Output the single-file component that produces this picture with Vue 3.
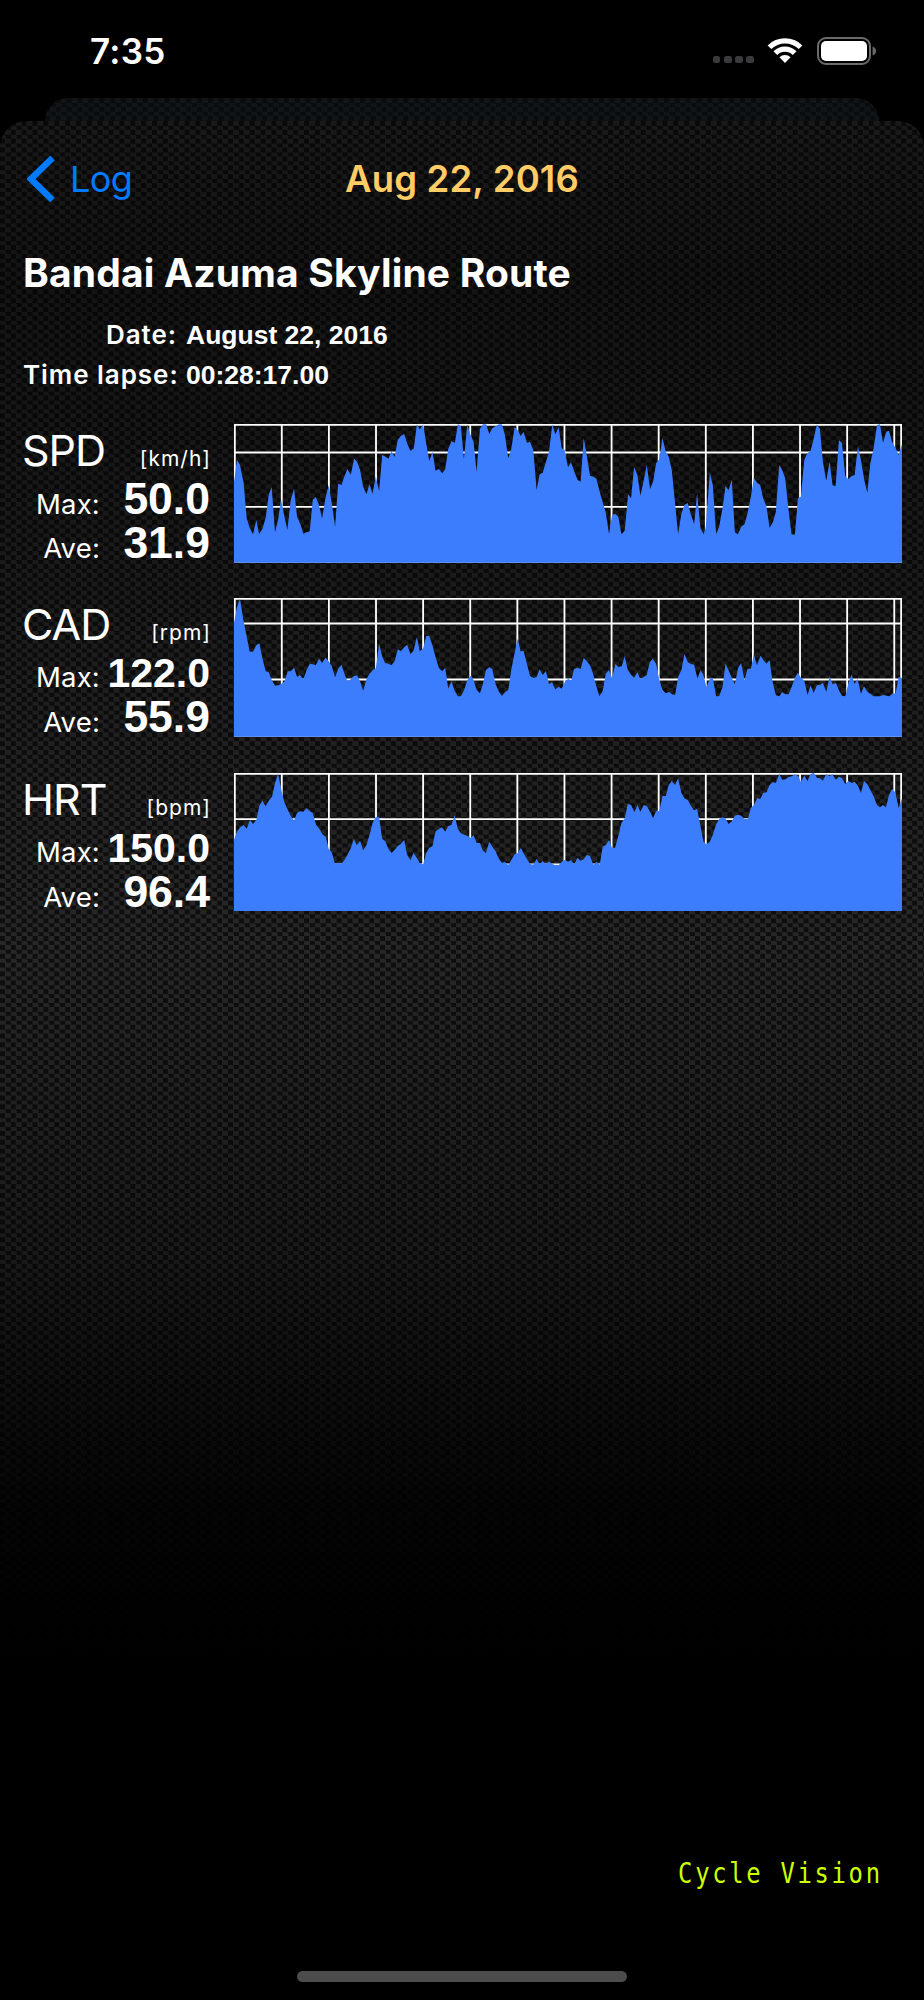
<template>
  <div class="screen">
    <header class="status-bar">
      <span class="clock">7:35</span>
      <div class="indicators">
        <div class="signal">
          <i v-for="n in 4" :key="n"></i>
        </div>
        <svg class="wifi" viewBox="0 0 36 27">
          <path d="M0.6 8.4 A24.6 24.6 0 0 1 35.4 8.4 L31.7 12.1 A19.4 19.4 0 0 0 4.3 12.1 Z" />
          <path d="M6.5 14.3 A16.3 16.3 0 0 1 29.5 14.3 L25.8 18 A11.1 11.1 0 0 0 10.2 18 Z" />
          <path d="M12.4 20.2 A8 8 0 0 1 23.6 20.2 L18 26 Z" />
        </svg>
        <svg class="battery" viewBox="0 0 60 28">
          <rect x="1" y="1" width="52" height="26" rx="8" fill="none" stroke="#6a6a6a" stroke-width="2" />
          <rect x="4" y="4" width="46" height="20" rx="5" fill="#fff" />
          <path d="M55.6 9.5 Q59 11 59 14 Q59 17 55.6 18.5 Z" fill="#6a6a6a" />
        </svg>
      </div>
    </header>

    <div class="sheet-behind"></div>

    <main class="sheet">
      <nav class="nav">
        <a class="back">
          <svg viewBox="0 0 28 46">
            <path d="M25.5 2 L4 23 L25.5 44" />
          </svg>
          <span>Log</span>
        </a>
        <span class="nav-title">Aug 22, 2016</span>
      </nav>

      <h1 class="route">Bandai Azuma Skyline Route</h1>

      <dl class="meta">
        <dt>Date:</dt>
        <dd>August 22, 2016</dd>
        <dt>Time lapse:</dt>
        <dd>00:28:17.00</dd>
      </dl>

      <section v-for="row in rows" :key="row.name" class="row">
        <div class="stats">
          <div class="stats-head">
            <span class="name">{{ row.name }}</span>
            <span class="unit">[{{ row.unit }}]</span>
          </div>
          <div class="stat">
            <span class="label">Max:</span>
            <span class="value" :class="{ small: row.max.length > 4 }">{{ row.max }}</span>
          </div>
          <div class="stat">
            <span class="label">Ave:</span>
            <span class="value">{{ row.ave }}</span>
          </div>
        </div>
        <svg class="chart" :viewBox="`28 ${row.top} 2002 416`" preserveAspectRatio="none">
          <g class="grid">
            <line v-for="n in 14" :key="n" :x1="30 + n * 141.2" :x2="30 + n * 141.2" :y1="row.top" :y2="row.top + 416" />
            <line v-for="y in row.lines" :key="y" x1="28" x2="2030" :y1="y" :y2="y" />
            <rect x="30.5" :y="row.top + 2.5" width="1997" height="411" />
          </g>
          <polygon class="area" :points="area(row)" />
        </svg>
      </section>

      <footer class="brand">Cycle Vision</footer>
      <div class="home-indicator"></div>
    </main>
  </div>
</template>

<script setup>
const rows = [
  {
    name: "SPD",
    unit: "km/h",
    max: "50.0",
    ave: "31.9",
    top: 27,
    lines: [112.5, 275.5],
    points: `28,200 37,135 46,150 57,205 66,310 75,338 85,358 95,315 103,357 113,342 123,308 132,240 141,216
      151,352 160,315 169,253 180,308 188,345 198,255 208,221 217,305 227,328 236,356 245,352 255,349 264,254
      273,246 282,268 292,310 302,250 312,210 322,270 331,335 340,206 350,210 359,184 368,162 378,179 388,131
      397,140 406,165 415,215 425,237 434,207 443,236 453,185 463,228 472,120 482,125 491,131 500,108 509,126
      519,74 528,63 538,57 548,88 557,108 567,100 576,28 585,43 595,28 604,85 613,138 623,110 632,167 642,162
      652,175 661,163 670,102 680,79 690,83 699,27 708,34 717,132 727,29 737,60 746,80 755,170 765,42 774,28
      784,28 793,57 802,40 812,34 822,28 831,28 840,60 850,130 859,102 869,36 878,45 887,63 896,50 906,84
      915,80 925,105 935,225 944,178 953,173 963,140 972,110 982,28 991,58 1001,37 1010,100 1019,105 1029,157
      1038,142 1048,170 1058,195 1067,200 1076,69 1086,125 1095,182 1105,185 1114,191 1124,230 1133,262
      1142,292 1152,357 1161,300 1171,297 1180,305 1189,358 1199,347 1209,238 1218,250 1227,156 1237,180
      1246,242 1255,200 1265,150 1275,222 1284,200 1293,145 1303,132 1312,69 1322,110 1331,125 1340,165
      1350,265 1359,357 1369,295 1378,269 1388,264 1397,298 1407,328 1416,234 1426,340 1436,358 1442,335
      1454,173 1463,210 1473,357 1482,335 1492,280 1501,213 1510,226 1520,194 1529,352 1538,358 1548,335
      1558,328 1567,295 1577,245 1586,190 1596,203 1605,210 1614,250 1624,275 1633,338 1643,322 1652,290
      1662,150 1671,165 1680,190 1690,285 1699,358 1709,359 1718,250 1727,245 1737,135 1746,115 1756,108
      1765,72 1775,28 1784,42 1793,140 1803,197 1813,140 1822,211 1831,214 1841,75 1850,84 1860,184 1869,192
      1878,184 1888,180 1898,94 1907,135 1917,195 1926,233 1935,145 1945,100 1955,30 1964,28 1973,83 1983,50
      1991,47 2000,80 2011,100 2020,120 2030,88`,
  },
  {
    name: "CAD",
    unit: "rpm",
    max: "122.0",
    ave: "55.9",
    top: 25,
    lines: [101.5, 269.5],
    points: `28,100 37,52 46,27 56,90 65,135 75,186 85,186 95,167 104,161 113,205 123,245 132,248 141,270
      151,288 160,287 169,283 179,276 189,245 198,245 208,234 217,262 226,256 236,269 246,240 255,222 264,224
      273,227 283,207 292,220 302,204 312,215 321,230 331,263 340,238 350,225 359,252 368,275 378,269 387,259
      397,257 406,275 415,303 425,268 434,252 444,241 453,236 463,162 472,200 481,220 491,222 500,227 510,213
      519,178 528,185 538,173 547,165 557,194 566,183 576,142 585,185 595,176 604,139 613,138 623,168 632,202
      642,235 652,245 661,234 670,297 680,275 689,303 699,320 708,320 718,300 727,272 737,258 746,270 755,300
      765,311 774,283 783,241 793,233 802,238 812,283 821,305 831,319 840,308 850,301 859,240 869,190 878,147
      887,185 896,184 906,223 915,258 925,265 935,262 944,239 953,256 963,244 972,284 981,278 991,299 1001,291
      1010,297 1019,278 1029,268 1039,272 1047,238 1057,234 1067,238 1076,204 1086,215 1096,229 1105,255
      1114,290 1123,320 1133,305 1142,252 1152,241 1161,265 1171,223 1180,232 1190,230 1199,200 1208,240
      1218,255 1227,264 1237,248 1246,268 1256,262 1265,256 1274,218 1283,207 1293,222 1303,272 1312,300
      1322,311 1333,307 1341,314 1350,316 1359,262 1369,240 1378,193 1388,217 1397,223 1407,225 1417,267
      1426,242 1435,256 1444,292 1454,267 1463,265 1473,320 1482,320 1492,292 1501,222 1511,243 1520,265
      1529,284 1539,234 1548,220 1558,272 1567,237 1577,237 1586,194 1595,227 1606,198 1615,212 1624,222
      1633,211 1642,275 1652,317 1662,320 1671,307 1680,314 1690,314 1700,290 1709,264 1718,249 1728,266
      1737,272 1747,316 1756,287 1765,310 1775,287 1785,285 1793,279 1803,306 1813,261 1822,284 1832,280
      1841,302 1850,318 1860,320 1870,278 1879,255 1888,283 1897,268 1907,312 1916,290 1926,306 1935,312
      1945,320 1964,320 1973,316 1992,320 2001,312 2011,311 2020,262 2030,265`,
  },
  {
    name: "HRT",
    unit: "bpm",
    max: "150.0",
    ave: "96.4",
    top: 22,
    lines: [160.5, 296.5],
    points: `28,222 37,198 47,184 57,178 66,189 76,162 85,175 95,162 104,120 113,105 123,122 132,105 142,93
      151,52 160,24 170,72 179,110 189,132 198,150 208,165 217,141 226,137 236,138 245,128 255,136 264,142
      274,177 284,190 293,206 303,213 312,250 321,260 331,296 340,291 350,294 359,283 368,267 378,248 387,220
      396,238 406,225 415,254 425,238 434,208 444,170 453,154 463,154 472,219 481,226 491,250 500,262 510,252
      519,240 528,235 538,222 547,268 557,284 566,262 576,276 585,293 595,296 604,262 613,247 623,241 632,197
      642,190 651,185 661,198 670,181 680,178 689,149 699,190 708,203 718,207 727,210 737,217 746,208 755,232
      765,232 774,255 783,262 793,228 802,243 812,257 821,278 831,292 840,289 850,298 859,283 869,266 878,263
      888,247 897,265 906,280 916,295 925,297 935,280 944,296 953,286 963,296 972,287 982,295 991,299 1001,299
      1010,288 1020,282 1029,288 1038,284 1048,296 1057,276 1067,285 1076,281 1085,268 1095,271 1105,297
      1114,288 1124,297 1133,243 1142,238 1152,223 1161,247 1170,246 1180,210 1189,172 1199,158 1208,115
      1218,118 1228,140 1237,118 1246,138 1256,118 1265,121 1275,138 1284,158 1293,135 1303,137 1312,90
      1322,91 1331,58 1340,46 1350,58 1359,38 1369,82 1378,98 1388,103 1397,120 1407,134 1416,130 1425,175
      1435,228 1444,236 1454,228 1463,207 1473,176 1482,160 1492,155 1501,158 1510,175 1520,167 1529,150
      1539,147 1548,150 1558,160 1568,160 1577,127 1586,118 1596,98 1605,100 1614,82 1624,80 1633,58 1642,50
      1652,52 1662,25 1671,42 1680,41 1690,34 1700,32 1709,26 1719,32 1727,48 1737,30 1747,46 1756,24 1766,22
      1775,36 1784,38 1793,45 1803,25 1813,32 1821,25 1831,42 1841,33 1850,37 1860,55 1869,46 1879,52 1888,48
      1898,60 1907,82 1916,46 1926,55 1935,72 1945,92 1955,118 1964,125 1973,118 1982,125 1991,88 2000,70
      2010,80 2020,128 2030,98`,
  },
];

// close the curve along the bottom edge of the chart
const area = (row) => {
  const bottom = row.top + 416;
  return `28,${bottom} ${row.points} 2030,${bottom}`;
};
</script>

<style>
body {
  background: #000;
}
</style>

<style scoped>
.screen {
  display: flex;
  flex-direction: column;
  width: 924px;
  height: 2000px;
  overflow: hidden;
  background: #000;
  color: #fff;
  font-family: Inter, "Liberation Sans", sans-serif;
}

.status-bar {
  display: flex;
  justify-content: space-between;
  align-items: center;
  box-sizing: border-box;
  height: 98px;
  padding: 3px 47px 0 90px;
}

.clock {
  font-size: 35px;
  font-weight: 600;
  letter-spacing: 0.3px;
}

.indicators {
  display: flex;
  align-items: center;
}

.signal {
  display: flex;
  gap: 3.6px;
  margin: 18px 13px 0 0;
}

.signal i {
  width: 7.6px;
  height: 7.6px;
  border-radius: 2.5px;
  background: #3a3a3c;
}

.wifi {
  width: 36px;
  height: 27px;
  margin-right: 14px;
  fill: #fff;
}

.battery {
  width: 60px;
  height: 28px;
}

.sheet-behind {
  flex: none;
  height: 23px;
  margin: 0 45px;
  border-radius: 24px 24px 0 0;
  background:
    linear-gradient(rgba(8, 14, 18, 0.5), rgba(8, 14, 18, 0.5)),
    repeating-conic-gradient(#1c1c1c 0 25%, #0a0a0a 0 50%) 0 0 / 10.86px 8.86px;
}

/* woven carbon texture, brightest around the middle and fading to black */
.sheet {
  flex: 1;
  display: flex;
  flex-direction: column;
  border-radius: 26px 26px 0 0;
  background:
    linear-gradient(
      rgba(0, 0, 0, 0.35) 0,
      rgba(0, 0, 0, 0.5) 160px,
      rgba(0, 0, 0, 0.36) 400px,
      rgba(0, 0, 0, 0) 830px,
      rgba(0, 0, 0, 0.35) 1130px,
      rgba(0, 0, 0, 0.88) 1390px,
      #000 1540px
    ),
    repeating-conic-gradient(#272727 0 25%, #0e0e0e 0 50%) 0 0 / 10.86px 8.86px;
}

.nav {
  display: grid;
  grid-template-columns: 1fr auto 1fr;
  align-items: center;
  height: 116px;
  font-size: 36.5px;
}

.back {
  display: flex;
  align-items: center;
  gap: 15px;
  padding-left: 27px;
  color: #007aff;
  font-size: 36px;
  letter-spacing: -0.6px;
}

.back svg {
  width: 28px;
  height: 46px;
  fill: none;
  stroke: #007aff;
  stroke-width: 6.5;
}

.nav-title {
  color: #ffcc66;
  font-weight: 600;
  letter-spacing: 0.15px;
}

.route {
  margin: 11px 0 0 23px;
  font-size: 39px;
  font-weight: 700;
  line-height: 50px;
  letter-spacing: 0.18px;
}

.meta {
  display: grid;
  grid-template-columns: 154px auto;
  column-gap: 9px;
  margin: 17px 0 0 23px;
  font-size: 26px;
  font-weight: 600;
  line-height: 40px;
}

.meta dt {
  text-align: right;
  white-space: nowrap;
  letter-spacing: 0.95px;
}

.meta dd {
  margin: 0;
  font-family: "Liberation Sans", sans-serif;
  font-size: 26.5px;
  font-weight: 700;
}

.row {
  display: flex;
  height: 139px;
  margin: 29px 22px 6.3px 23px;
}

.stats {
  width: 187px;
  margin-right: 24px;
}

.stats-head {
  display: flex;
  justify-content: space-between;
  align-items: baseline;
  height: 53px;
  line-height: 53px;
}

.name {
  margin-left: -1px;
  font-size: 43px;
  font-weight: 400;
  letter-spacing: -1px;
}

.unit {
  margin-right: -1px;
  font-size: 21px;
  letter-spacing: 1px;
}

.stat {
  display: flex;
  justify-content: space-between;
  align-items: baseline;
  height: 44px;
  line-height: 44px;
}

.label {
  width: 77px;
  font-size: 27.5px;
  text-align: right;
  letter-spacing: 0.2px;
}

.value {
  font-family: "Liberation Sans", sans-serif;
  font-size: 44.5px;
  font-weight: 700;
}

.value.small {
  font-size: 41px;
}

.chart {
  width: 668px;
  height: 138.7px;
  flex: none;
}

.grid {
  fill: none;
  stroke: #fff;
  stroke-width: 5.5;
}

.area {
  fill: #3c7dfe;
}

.brand {
  margin: auto 41px 77px auto;
  color: #ccff00;
  font-family: "DejaVu Sans Mono", monospace;
  font-size: 28px;
  line-height: 40px;
  letter-spacing: 3.2px;
  transform: scaleX(0.85);
  transform-origin: right;
}

.home-indicator {
  width: 330px;
  height: 11px;
  margin: 0 auto 18px;
  border-radius: 6px;
  background: #4c4c4c;
}
</style>
